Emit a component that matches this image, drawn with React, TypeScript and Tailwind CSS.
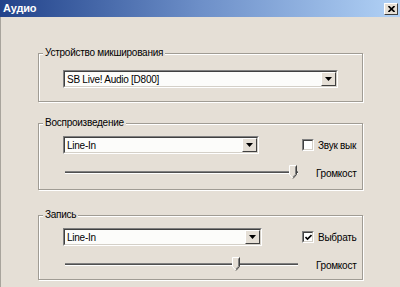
import React from "react";

const BG = "bg-[#e5dfd6]";

function Combo({ value, width }: { value: string; width: string }) {
  return (
    <div className={"h-[18px] border border-t-[#808080] border-l-[#808080] border-b-white border-r-white " + width}>
      <div className="h-full w-full border border-t-[#404040] border-l-[#404040] border-b-[#d4d0c8] border-r-[#d4d0c8] bg-[#fcfcfa] flex items-center">
        <span className="flex-1 pl-[2px] leading-[13px] whitespace-nowrap overflow-hidden">{value}</span>
        <div className={"w-[15px] h-[14px] shrink-0 " + BG + " border border-t-white border-l-white border-b-[#404040] border-r-[#404040] flex items-center justify-center"}>
          <svg width="7" height="4" viewBox="0 0 7 4">
            <polygon points="0,0 7,0 3.5,4" fill="#000" />
          </svg>
        </div>
      </div>
    </div>
  );
}

function Thumb() {
  return (
    <svg width="8" height="14" viewBox="0 0 8 14" className="block">
      <polygon points="0.5,0.5 7.5,0.5 7.5,9.5 4,13.5 0.5,9.5" fill="#e5dfd6" />
      <polyline points="0.5,9.5 0.5,0.5 7,0.5" fill="none" stroke="#ffffff" strokeWidth="1" />
      <polyline points="7.5,0.5 7.5,9.5 4,13.5" fill="none" stroke="#404040" strokeWidth="1" />
      <polyline points="6.5,1.5 6.5,9.2 4,12" fill="none" stroke="#808080" strokeWidth="1" />
      <line x1="0.5" y1="9.5" x2="3.5" y2="13" stroke="#ffffff" strokeWidth="1" />
    </svg>
  );
}

function Slider({ pos }: { pos: number }) {
  return (
    <div className="relative h-[14px] w-[233px] ml-[2px]">
      <div className="absolute left-0 right-0 top-[6px] h-[3px] border-t border-t-[#808080] border-b border-b-white bg-[#505050]" />
      <div className="absolute top-0" style={{ left: pos }}>
        <Thumb />
      </div>
    </div>
  );
}

function Check({ checked }: { checked?: boolean }) {
  return (
    <div className="w-[12px] h-[12px] shrink-0 border border-t-[#808080] border-l-[#808080] border-b-white border-r-white">
      <div className="w-full h-full bg-white border border-t-[#404040] border-l-[#404040] border-b-[#d4d0c8] border-r-[#d4d0c8] flex items-center justify-center">
        {checked && (
          <svg width="7" height="7" viewBox="0 0 7 7">
            <polyline points="0.5,3 2.5,5 6.5,1" fill="none" stroke="#000" strokeWidth="1.6" />
          </svg>
        )}
      </div>
    </div>
  );
}

function Group({
  label,
  className,
  children,
}: {
  label: string;
  className: string;
  children: React.ReactNode;
}) {
  return (
    <div
      className={
        "relative w-[325px] border border-[#a09c94] shadow-[inset_1px_1px_0_#ffffff,1px_1px_0_#ffffff] " +
        className
      }
    >
      <span className={"absolute left-[4px] top-[-8px] px-[2px] leading-[13px] whitespace-nowrap " + BG}>{label}</span>
      {children}
    </div>
  );
}

function MixRow({
  value,
  comboW,
  check,
  checked,
  thumb,
}: {
  value: string;
  comboW: string;
  check: string;
  checked?: boolean;
  thumb: number;
}) {
  return (
    <div className="flex">
      <div className="w-[239px] shrink-0 flex flex-col">
        <Combo value={value} width={comboW} />
        <div className="mt-[11px]">
          <Slider pos={thumb} />
        </div>
      </div>
      <div className="flex flex-col">
        <div className="h-[18px] flex items-center whitespace-nowrap">
          <Check checked={checked} />
          <span className="ml-[4px] leading-[13px]">{check}</span>
        </div>
        <div className="mt-[11px] h-[14px] flex items-center pl-[14px] whitespace-nowrap leading-[13px] pt-[3px]">
          Громкост
        </div>
      </div>
    </div>
  );
}

export default function App() {
  return (
    <div
      className={
        "w-[400px] h-[287px] overflow-hidden flex flex-col text-[10px] tracking-[-0.25px] text-black font-['Liberation_Sans',Arial,sans-serif] " +
        BG
      }
    >
      <div className="h-[17px] shrink-0 flex items-center justify-between bg-gradient-to-r from-[#22428a] via-[#6d8fc8] to-[#b2d2f6] pl-[3px] pr-[2px]">
        <span className="text-white font-bold text-[11px] tracking-[-0.2px] leading-[13px]">Аудио</span>
        <div className="w-[14px] h-[12px] bg-[#e5dfd6] border border-t-white border-l-white border-b-[#404040] border-r-[#404040] flex items-center justify-center">
          <svg width="7" height="6" viewBox="0 0 7 6">
            <line x1="0.5" y1="0" x2="6.5" y2="6" stroke="#000" strokeWidth="1.6" />
            <line x1="6.5" y1="0" x2="0.5" y2="6" stroke="#000" strokeWidth="1.6" />
          </svg>
        </div>
      </div>
      <div className="flex-1 border-l border-l-[#a8a49c] pl-[37px] pt-[36px] flex flex-col">
        <Group label="Устройство микширования" className="h-[49px] pt-[16px] pl-[24px]">
          <Combo value="SB Live! Audio [D800]" width="w-[275px]" />
        </Group>
        <Group label="Воспроизведение" className="mt-[21px] h-[67px] pt-[12px] pl-[24px]">
          <MixRow value="Line-In" comboW="w-[196px]" check="Звук вык" thumb={224} />
        </Group>
        <Group label="Запись" className="mt-[25px] h-[65px] pt-[12px] pl-[24px]">
          <MixRow value="Line-In" comboW="w-[199px]" check="Выбрать" checked thumb={167} />
        </Group>
      </div>
    </div>
  );
}
